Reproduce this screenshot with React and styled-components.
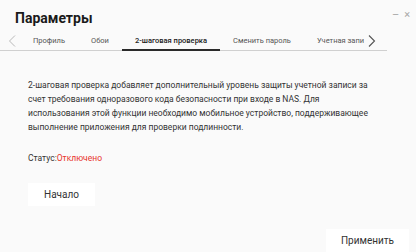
import { createGlobalStyle, styled } from "styled-components";

const GlobalStyle = createGlobalStyle`
  html, body {
    margin: 0;
    padding: 0;
    background: #fafafa;
  }
  body {
    font-family: Roboto, "Noto Sans", "Liberation Sans", sans-serif;
  }
`;

const tabs = [
  "Профиль",
  "Обои",
  "2-шаговая проверка",
  "Сменить пароль",
  "Учетная запись",
];

const App = () => {
  return (
    <>
      <GlobalStyle />
      <StyledWindow>
        <StyledHeader>
          <StyledTitle>Параметры</StyledTitle>
          <StyledControls>
            <StyledControl>–</StyledControl>
            <StyledControl>×</StyledControl>
          </StyledControls>
        </StyledHeader>

        <StyledTabBar>
          <StyledArrow>
            <svg width="8" height="12" viewBox="0 0 8 12">
              <path d="M7 0.5 L1.5 6 L7 11.5" fill="none" stroke="#b8b8b8" strokeWidth="1" />
            </svg>
          </StyledArrow>
          <StyledTabs>
            {tabs.map((tab) => (
              <StyledTab key={tab} $active={tab === "2-шаговая проверка"}>
                {tab}
              </StyledTab>
            ))}
          </StyledTabs>
          <StyledArrow>
            <svg width="8" height="12" viewBox="0 0 8 12">
              <path d="M1 0.5 L6.5 6 L1 11.5" fill="none" stroke="#555" strokeWidth="1.1" />
            </svg>
          </StyledArrow>
        </StyledTabBar>

        <StyledContent>
          <StyledText>
            2-шаговая проверка добавляет дополнительный уровень защиты учетной записи за
            счет требования одноразового кода безопасности при входе в NAS. Для
            использования этой функции необходимо мобильное устройство, поддерживающее
            выполнение приложения для проверки подлинности.
          </StyledText>
          <StyledStatus>
            Статус:<StyledOff>Отключено</StyledOff>
          </StyledStatus>
          <StyledButton $width="67px">Начало</StyledButton>
        </StyledContent>

        <StyledFooter>
          <StyledButton $width="83px">Применить</StyledButton>
        </StyledFooter>
      </StyledWindow>
    </>
  );
};

const StyledWindow = styled.div`
  width: 416px;
  height: 252px;
  display: flex;
  flex-direction: column;
  background: #fafafa;
  overflow: hidden;
`;

const StyledHeader = styled.div`
  display: flex;
  justify-content: space-between;
  align-items: flex-start;
  padding: 8px 6px 0 15px;
  height: 31px;
  box-sizing: border-box;
`;

const StyledTitle = styled.h1`
  margin: 0;
  font-size: 14px;
  font-weight: 700;
  color: #1a1a1a;
  line-height: 20px;
`;

const StyledControls = styled.div`
  display: flex;
  gap: 5px;
  padding-top: 1px;
`;

const StyledControl = styled.span`
  font-size: 11px;
  color: #a8a8a8;
  line-height: 12px;
`;

const StyledTabBar = styled.div`
  display: flex;
  align-items: center;
  width: 387px;
  height: 20px;
  border-bottom: 1px solid #d0d0d0;
  padding-left: 8px;
  box-sizing: border-box;
`;

const StyledArrow = styled.div`
  display: flex;
  align-items: center;
  width: 8px;
  height: 20px;
`;

const StyledTabs = styled.div`
  display: flex;
  margin: 0 4px 0 4px;
  width: 344px;
  overflow: hidden;
  height: 20px;
`;

const StyledTab = styled.div`
  flex-shrink: 0;
  padding: 1px 13px 0;
  height: 20px;
  box-sizing: border-box;
  display: flex;
  align-items: center;
  font-size: 7.5px;
  white-space: nowrap;
  color: ${({ $active }) => ($active ? "#1a1a1a" : "#555")};
  font-weight: ${({ $active }) => ($active ? 500 : 400)};
  border-bottom: 2px solid ${({ $active }) => ($active ? "#2a2a2a" : "transparent")};
`;

const StyledContent = styled.div`
  display: flex;
  flex-direction: column;
  align-items: flex-start;
  padding: 27px 0 0 28px;
`;

const StyledText = styled.p`
  margin: 0;
  width: 340px;
  font-size: 8.5px;
  line-height: 14px;
  color: #333;
`;

const StyledStatus = styled.div`
  margin-top: 19px;
  font-size: 8.5px;
  color: #333;
`;

const StyledOff = styled.span`
  color: #e8332a;
`;

const StyledButton = styled.div`
  width: ${({ $width }) => $width};
  height: 23px;
  background: #fff;
  display: flex;
  align-items: center;
  justify-content: center;
  font-size: 10px;
  color: #333;
  margin-top: 20px;
`;

const StyledFooter = styled.div`
  display: flex;
  justify-content: flex-end;
  padding: 3px 7px 0 0;
`;

export default App;
